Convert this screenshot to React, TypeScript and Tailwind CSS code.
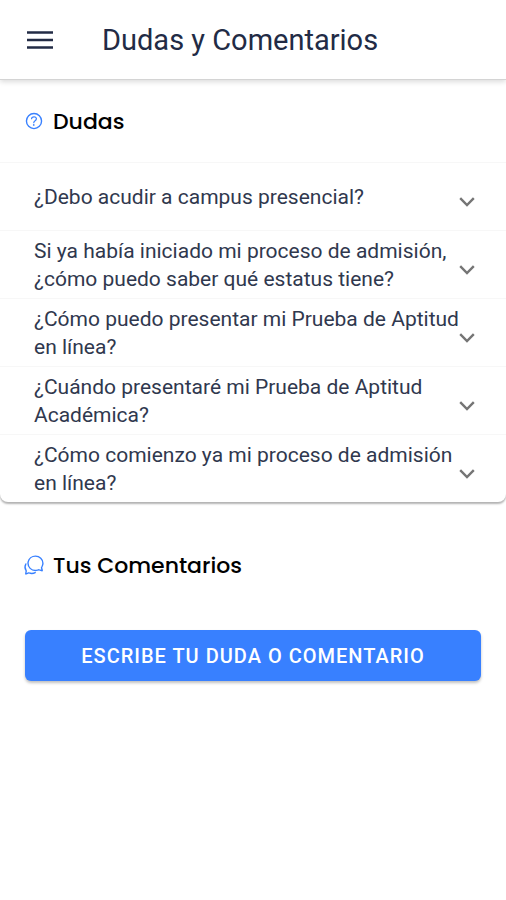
import { useState } from "react";
import { IoChatbubblesOutline, IoHelpCircleOutline } from "react-icons/io5";

const questions = [
    "¿Debo acudir a campus presencial?",
    "Si ya había iniciado mi proceso de admisión, ¿cómo puedo saber qué estatus tiene?",
    "¿Cómo puedo presentar mi Prueba de Aptitud en línea?",
    "¿Cuándo presentaré mi Prueba de Aptitud Académica?",
    "¿Cómo comienzo ya mi proceso de admisión en línea?",
];

const Chevron = ({ open }: { open: boolean }) => (
    <svg
        viewBox="0 0 16 10"
        aria-hidden="true"
        className={`mt-2.5 -ml-1 h-2.5 w-4 shrink-0 ${open ? "rotate-180" : ""}`}
    >
        <path
            d="M1.2 1.2 8 8l6.8-6.8"
            fill="none"
            stroke="#757575"
            strokeWidth="2.4"
        />
    </svg>
);

const App = () => {
    const [selected, setSelected] = useState<number | null>(null);

    return (
        <div className="min-h-screen bg-white font-['Roboto',sans-serif] text-[#222b45]">
            <header className="flex h-20 items-center gap-[49px] border-b border-[#d4d4d4] px-[27px] shadow-[0_2px_5px_rgba(0,0,0,0.14)]">
                <button type="button" aria-label="Menú">
                    <svg viewBox="0 0 26 18" className="h-[18px] w-[26px]">
                        <path
                            d="M0 1.5h26M0 9h26M0 16.5h26"
                            stroke="#222b45"
                            strokeWidth="2.4"
                        />
                    </svg>
                </button>
                <h1 className="text-[29px] leading-8 font-normal">
                    Dudas y Comentarios
                </h1>
            </header>

            <main>
                <section className="rounded-b-lg shadow-[0_2px_2px_rgba(0,0,0,0.3)]">
                    <h2 className="flex h-[82px] items-center gap-2 px-[23px] font-['Poppins','Inter',sans-serif] text-[22px] font-medium text-black">
                        <IoHelpCircleOutline className="size-[22px] text-[#3880ff]" />
                        Dudas
                    </h2>
                    <ul>
                        {questions.map((question, i) => (
                            <li key={question} className="border-t border-[#f7f7f7]">
                                <button
                                    type="button"
                                    aria-expanded={selected === i}
                                    onClick={() =>
                                        setSelected(selected === i ? null : i)
                                    }
                                    className="flex min-h-[67px] w-full items-center pr-[31px] pl-[34px] text-left text-[21px] leading-7 text-[#30384e]"
                                >
                                    <span className="flex-1">{question}</span>
                                    <Chevron open={selected === i} />
                                </button>
                            </li>
                        ))}
                    </ul>
                </section>

                <section className="pt-[47px]">
                    <h2 className="flex h-8 items-center gap-2 px-[23px] font-['Poppins','Inter',sans-serif] text-[22px] font-medium text-black">
                        <IoChatbubblesOutline className="size-[22px] text-[#3880ff]" />
                        Tus Comentarios
                    </h2>
                    <div className="px-[25px] pt-[49px]">
                        <button
                            type="button"
                            className="h-[51px] w-full rounded-md bg-[#3880ff] text-xl font-medium tracking-wider text-white uppercase shadow-[0_2px_3px_rgba(0,0,0,0.25)]"
                        >
                            Escribe tu duda o comentario
                        </button>
                    </div>
                </section>
            </main>
        </div>
    );
};

export default App;
